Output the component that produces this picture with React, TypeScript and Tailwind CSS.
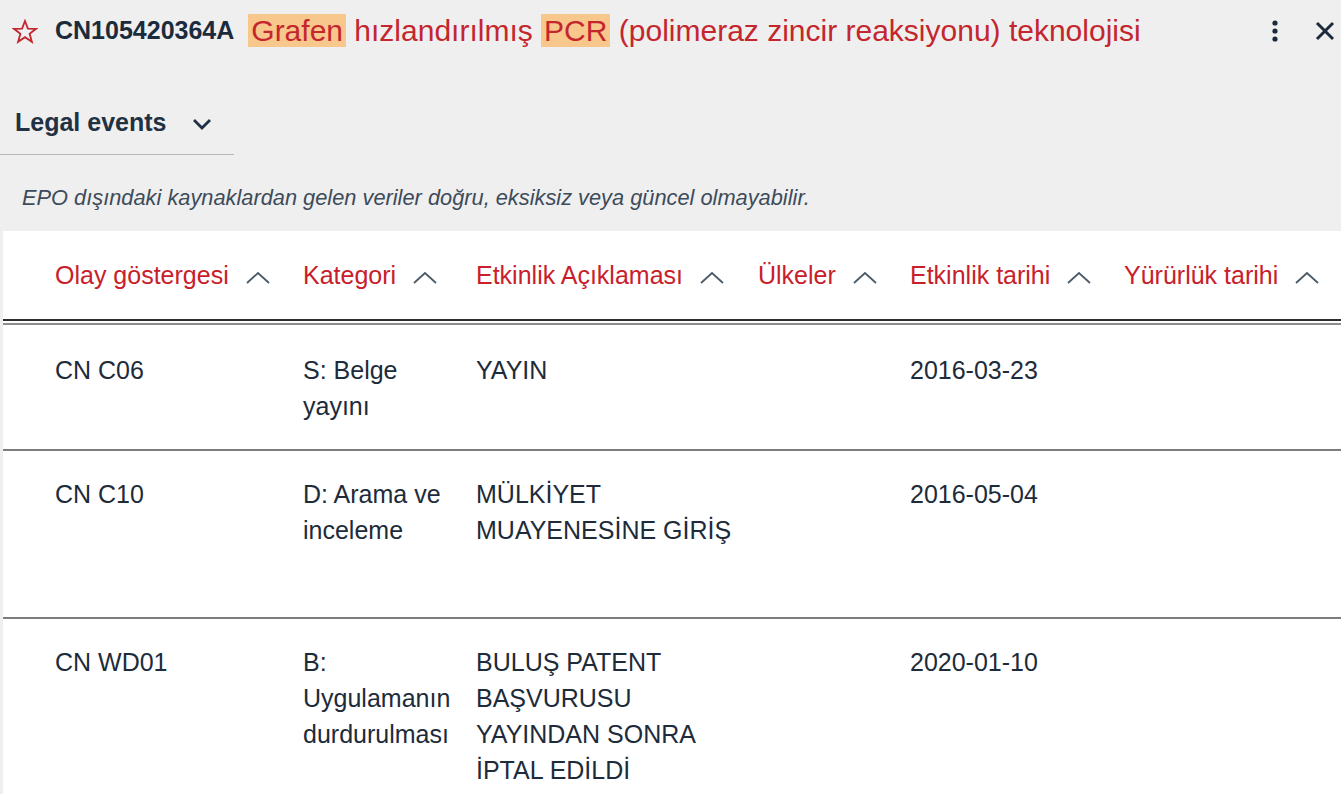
import React from "react";

const Caret = () => (
  <svg width="26" height="16" viewBox="0 0 26 16" className="shrink-0 ml-[16px] mt-[4px]">
    <path d="M2 13 L13 3 L24 13" fill="none" stroke="#4b5a68" strokeWidth="1.8" />
  </svg>
);

const headers = [
  "Olay göstergesi",
  "Kategori",
  "Etkinlik Açıklaması",
  "Ülkeler",
  "Etkinlik tarihi",
  "Yürürlük tarihi",
];

type Row = { cells: string[][]; h: string };

const rows: Row[] = [
  { cells: [["CN C06"], ["S: Belge", "yayını"], ["YAYIN"], [], ["2016-03-23"], []], h: "h-[126px] pt-[27px]" },
  {
    cells: [["CN C10"], ["D: Arama ve", "inceleme"], ["MÜLKİYET", "MUAYENESİNE GİRİŞ"], [], ["2016-05-04"], []],
    h: "h-[168px] pt-[25px]",
  },
  {
    cells: [
      ["CN WD01"],
      ["B:", "Uygulamanın", "durdurulması"],
      ["BULUŞ PATENT", "BAŞVURUSU", "YAYINDAN SONRA", "İPTAL EDİLDİ"],
      [],
      ["2020-01-10"],
      [],
    ],
    h: "h-[200px] pt-[25px]",
  },
];

export default function App() {
  return (
    <div className="w-[1341px] h-[794px] overflow-hidden bg-[#efefef] font-['Liberation_Sans',Arial,sans-serif]">
      {/* Title bar */}
      <div className="flex items-center h-[62px] pl-[12px] pr-[7px]">
        <svg width="26" height="25" viewBox="0 0 26 25" className="shrink-0">
          <polygon
            points="13,2 15.9,9.6 24,9.8 17.6,14.8 19.9,22.8 13,18.2 6.1,22.8 8.4,14.8 2,9.8 10.1,9.6"
            fill="none"
            stroke="#c4262e"
            strokeWidth="1.8"
            strokeLinejoin="miter"
          />
        </svg>
        <span className="ml-[17px] text-[25px] font-bold text-[#1b2b3c] whitespace-nowrap">CN105420364A</span>
        <span className="ml-[14px] text-[30px] text-[#c4262e] whitespace-nowrap leading-[34px]">
          <span className="bg-[#f8c78c] px-[3px]">Grafen</span> hızlandırılmış{" "}
          <span className="bg-[#f8c78c] px-[3px]">PCR</span> (polimeraz zincir reaksiyonu) teknolojisi
        </span>
        <div className="flex-1" />
        <svg width="8" height="22" viewBox="0 0 8 22" className="shrink-0 mr-[35px]">
          <circle cx="4" cy="3" r="2.6" fill="#1b2b3c" />
          <circle cx="4" cy="11" r="2.6" fill="#1b2b3c" />
          <circle cx="4" cy="19" r="2.6" fill="#1b2b3c" />
        </svg>
        <svg width="22" height="22" viewBox="0 0 22 22" className="shrink-0 mr-[-2px]">
          <path d="M3 3 L19 19 M19 3 L3 19" stroke="#1b2b3c" strokeWidth="3" />
        </svg>
      </div>

      {/* Legal events */}
      <div className="mt-[26px] w-[234px] h-[67px] border-b border-[#b9b9b9] flex items-center pl-[15px] pt-[4px]">
        <span className="text-[25px] font-bold text-[#1f3142]">Legal events</span>
        <svg width="22" height="14" viewBox="0 0 22 14" className="ml-[25px] mt-[2px]">
          <path d="M3 3 L11 11 L19 3" fill="none" stroke="#1f3142" strokeWidth="2.8" />
        </svg>
      </div>

      {/* Disclaimer */}
      <div className="h-[76px] flex items-center pl-[22px] pt-[10px]">
        <span className="italic text-[21.8px] text-[#3d4b5a] whitespace-nowrap">
          EPO dışındaki kaynaklardan gelen veriler doğru, eksiksiz veya güncel olmayabilir.
        </span>
      </div>

      {/* Table */}
      <div className="ml-[3px] bg-white h-[600px]">
        <div className="grid grid-cols-[300px_173px_282px_152px_214px_1fr] h-[90px] items-center pt-[2px] border-b-2 border-[#2e2e2e]">
          {headers.map((h, i) => (
            <div key={i} className={`flex items-center ${i === 0 ? "pl-[52px]" : ""}`}>
              <span className="text-[25px] text-[#c8202a] whitespace-nowrap">{h}</span>
              <Caret />
            </div>
          ))}
        </div>
        <div className="h-[2px] mt-[2px] bg-[#8c8c8c]" />
        {rows.map((r, ri) => (
          <div
            key={ri}
            className={`grid grid-cols-[300px_173px_282px_152px_214px_1fr] ${r.h} ${
              ri < rows.length - 1 ? "border-b-2 border-[#7d7d7d]" : ""
            }`}
          >
            {r.cells.map((c, ci) => (
              <div key={ci} className={`text-[25px] leading-[36px] text-[#1d2b3a] ${ci === 0 ? "pl-[52px]" : ""}`}>
                {c.map((line, li) => (
                  <div key={li} className="whitespace-nowrap">
                    {line}
                  </div>
                ))}
              </div>
            ))}
          </div>
        ))}
      </div>
    </div>
  );
}
